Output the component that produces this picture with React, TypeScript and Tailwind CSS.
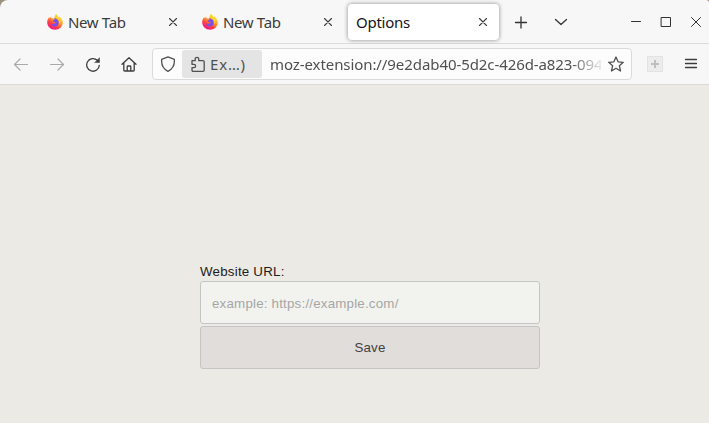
import React from "react";

type IconProps = { className?: string; children: React.ReactNode; sw?: number };

function Icon({ className = "", children, sw = 1.2 }: IconProps) {
  return (
    <svg
      viewBox="0 0 16 16"
      className={`h-4 w-4 shrink-0 ${className}`}
      fill="none"
      stroke="currentColor"
      strokeWidth={sw}
      strokeLinecap="round"
      strokeLinejoin="round"
    >
      {children}
    </svg>
  );
}

function Firefox({ id }: { id: string }) {
  return (
    <svg viewBox="0 0 16 16" className="h-4 w-4 shrink-0">
      <defs>
        <linearGradient id={id} x1="0.8" y1="0.05" x2="0.25" y2="0.95">
          <stop offset="0.1" stopColor="#ffe33e" />
          <stop offset="0.42" stopColor="#ff9a2b" />
          <stop offset="0.7" stopColor="#ff4045" />
          <stop offset="1" stopColor="#f0128a" />
        </linearGradient>
      </defs>
      <path
        d="M8.800.2c1.300.7 2 1.700 2.400 3 .6-.1.8-.5.9-1 2.200 1.500 3.700 4 3.700 6.400 0 4.100-3.500 7.200-7.700 7.200C3.700 15.800.2 12.500.2 8.300c0-2 .9-4 2.200-5.200l.3 1.300 1.300-1.800.7 1.800c1.100-.2 2.100 0 2.600.5C7.300 3.200 7.700 1.500 8.800.2Z"
        fill={`url(#${id})`}
      />
      <path d="M6.500 4.700c2.500-1 5.200.8 5.200 3.700 0 2.400-1.800 4-3.900 4-2 0-3.500-1.300-3.700-2.900.9.7 2.200.8 3.200.1.700-.4 1.200-.5 1.300-.9.100-.5-.5-.7-1.200-.8-.9-.1-1.500-.4-1.600-1 .1-.8 1.400-.8 2-1.200-.4-.5-.8-.8-1.300-1Z" fill="#7950ea" />
      <path d="M8.800.2c-1 2.200 0 3.600 1.500 4.900 1.600 1.400 2.400 2.900 1.700 5 2.300-2 1.700-5.100-.8-6.900-.4-1.300-1.100-2.300-2.400-3Z" fill="#ffd32f" />
    </svg>
  );
}

function CloseIcon() {
  return (
    <Icon sw={1.1} className="text-[#3d3d3d]">
      <path d="m4.500 4.500 7 7M11.500 4.500l-7 7" />
    </Icon>
  );
}

function Tab({ title, id, active = false }: { title: string; id?: string; active?: boolean }) {
  return (
    <div
      className={`flex h-9 w-[151px] shrink-0 items-center rounded pr-2 pl-[9px] ${
        active ? "bg-white text-[#15141a] shadow-[0_0_4px_rgba(0,0,0,0.45)]" : "text-[#3b3b3b]"
      }`}
    >
      {id && <Firefox id={id} />}
      <span className={`pt-[2px] whitespace-nowrap ${id ? "ml-[5px] tracking-[-0.35px]" : "-ml-px tracking-[-0.25px]"}`}>{title}</span>
      <div className="ml-auto flex">
        <CloseIcon />
      </div>
    </div>
  );
}

export default function App() {
  return (
    <div className="flex h-[423px] w-[709px] flex-col overflow-hidden bg-[#9a927c] font-['Noto_Sans',sans-serif] text-[15px]">
      <header className="flex h-11 shrink-0 items-center rounded-tl-[8px] rounded-tr-[3px] border-b border-[#dcdcdc] bg-[#f7f7f7] pl-[38px] text-[#333]">
        <div className="flex gap-1">
          <Tab title="New Tab" id="ff-one" />
          <Tab title="New Tab" id="ff-two" />
          <Tab title="Options" active />
        </div>
        <Icon className="ml-[14px]" sw={1.3}>
          <path d="M2.500 8.500h11M8 3v11" />
        </Icon>
        <Icon className="ml-6" sw={1.3}>
          <path d="m2.500 5.500 5.500 5 5.500-5" />
        </Icon>
        <Icon className="ml-[59px]" sw={1}>
          <path d="M3.500 7.500h9" />
        </Icon>
        <Icon className="ml-[14px]" sw={1}>
          <path d="M3.500 3.500h9v9h-9z" strokeLinejoin="miter" />
        </Icon>
        <Icon className="ml-[14px]" sw={1}>
          <path d="m3.500 3.500 9 9M12.500 3.500l-9 9" />
        </Icon>
      </header>

      <nav className="flex h-[41px] shrink-0 items-center border-b border-[#dbdbdb] bg-[#f7f7f7] pl-[13px] text-[#3d3d3d]">
        <Icon className="text-[#aaa]">
          <path d="M14.500 8.500H1.500M7 3 1.500 8.500 7 14" />
        </Icon>
        <Icon className="ml-5 text-[#aaa]">
          <path d="M1.500 8.500h13M9 3l5.500 5.500L9 14" />
        </Icon>
        <Icon className="ml-5" sw={1.3}>
          <path d="M14.300 9.300a6.300 6.300 0 1 1-2-5l1.300 1.300" />
          <path d="M14.500 2v4.500H10Z" fill="currentColor" strokeWidth="0.5" />
        </Icon>
        <Icon className="ml-5" sw={1.300}>
          <path d="M1 8.300 8 1.700l7 6.600M2.800 7v7.200c0 .5.300.8.800.8h8.800c.5 0 .8-.3.800-.8V7M6.200 15v-4.200c0-.5.300-.8.800-.8h2c.5 0 .8.300.8.800V15" />
        </Icon>

        <div className="ml-[15px] flex h-8 w-[480px] items-center rounded-[4px] border border-[#dadada] bg-[#fcfcfc] pr-[7px] pl-[7px] text-[#505050]">
          <Icon sw={1.3}>
            <path d="M8 .9 14.300 3.300c.5 5.200-1.600 9.700-6.300 12C3.300 13 1.200 8.500 1.700 3.300Z" />
          </Icon>
          <div className="ml-[6px] flex h-7 w-20 shrink-0 items-center rounded-[3px] bg-[#e4e4e4] pl-2">
            <Icon sw={1.300}>
              <path d="M2 4.700h3.200V3.100a1.800 1.800 0 0 1 3.600 0v1.600h4c.9 0 1.400.5 1.400 1.300v8c0 .8-.5 1.300-1.300 1.300H3.200c-.8 0-1.200-.5-1.200-1.300v-2.300h1.900a1.700 1.700 0 0 0 0-3.400H2V6.500Z" />
            </Icon>
            <span className="ml-1 pt-px tracking-[0.8px]">Ex…)</span>
          </div>
          <span className="ml-2 w-[331px] shrink-0 overflow-hidden pt-px whitespace-nowrap tracking-[-0.08px] [mask-image:linear-gradient(to_right,black_300px,transparent_335px)]">
            moz-extension://9e2dab40-5d2c-426d-a823-094
          </span>
          <Icon className="ml-auto" sw={1.300}>
            <path d="m8 1 2.100 4.800 5.200.5-3.900 3.500 1.100 5.200L8 12.300 3.500 15l1.100-5.200L.7 6.300l5.200-.5Z" />
          </Icon>
        </div>

        <div className="ml-[15px] flex h-4 w-4 border border-[#e3e3e3] bg-[#ececec] text-[#bfbfbf]">
          <svg viewBox="0 0 14 14" className="h-3.5 w-3.5" stroke="currentColor" strokeWidth="2">
            <path d="M3 7h8M7 3v8" />
          </svg>
        </div>
        <Icon className="ml-5" sw={1.300}>
          <path d="M2.500 3.500h11M2.500 7.500h11M2.500 11.500h11" />
        </Icon>
      </nav>

      <main className="flex-1 bg-[#ebeae4] pt-[178px] pl-[200px] font-['Liberation_Sans',Arial,sans-serif] text-[13.333px]">
        <form className="flex w-[340px] flex-col">
          <label htmlFor="website" className="h-[18px] leading-[18px] tracking-[0.22px] text-[#1c1c1c]">
            Website URL:
          </label>
          <input
            id="website"
            placeholder="example: https://example.com/"
            className="h-[43px] rounded-[3px] border border-[#c5c5c5] bg-[#f2f3ee] px-[11px] pt-[2px] tracking-[0.2px] placeholder:text-[#a6a6a6]"
          />
          <button type="button" className="mt-[2px] h-[43px] rounded-[3px] border border-[#c5c5c5] bg-[#e1ddda] pt-px tracking-[0.2px] text-[#424242]">
            Save
          </button>
        </form>
      </main>
    </div>
  );
}
